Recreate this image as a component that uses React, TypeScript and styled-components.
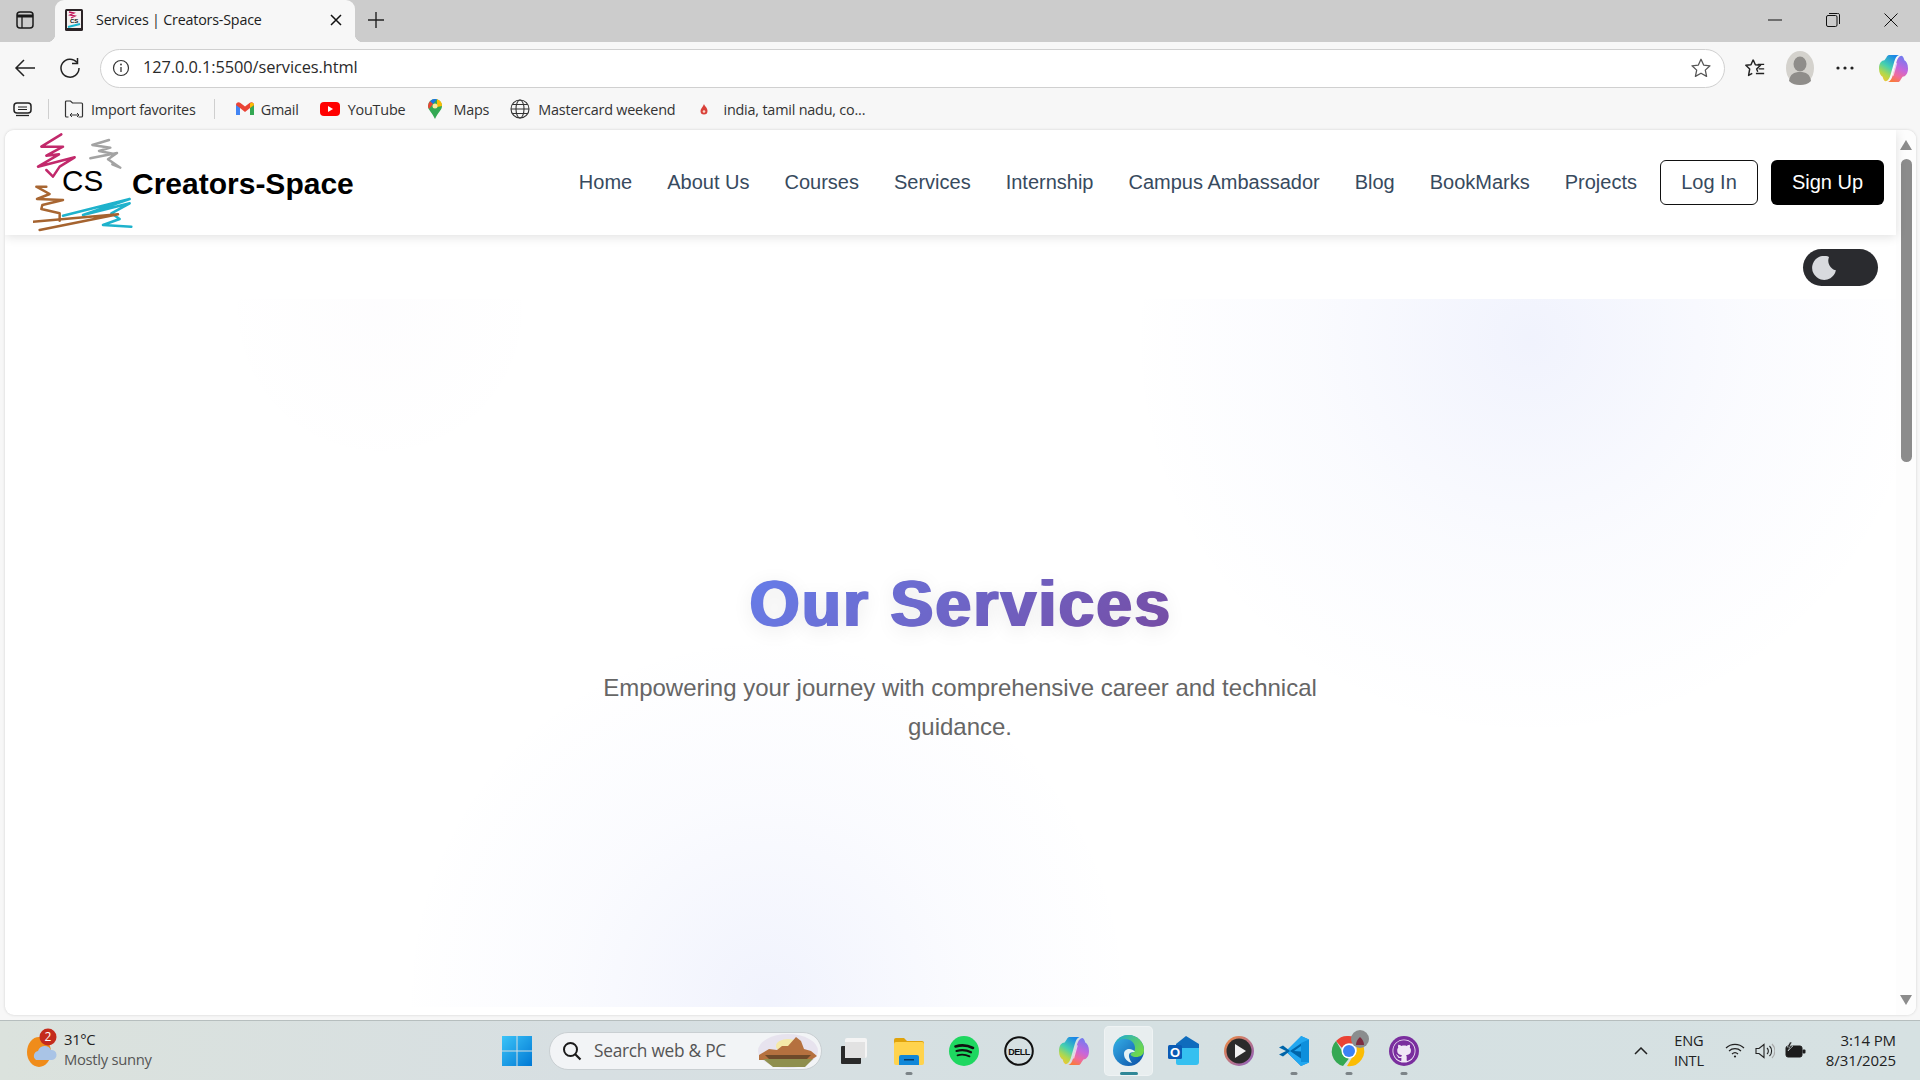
import React from "react";
import styled, { createGlobalStyle } from "styled-components";
import { FaGithub } from "react-icons/fa";

const Global = createGlobalStyle`
  html, body { margin: 0; padding: 0; height: 100%; overflow: hidden; background: #f7f7f7; }
  #root { height: 100%; }
  * { box-sizing: border-box; }
`;
const ui = `"Open Sans", "Noto Sans", "Liberation Sans", sans-serif`;
const web = `"Liberation Sans", Arial, sans-serif`;

const Screen = styled.div`
  width: 1920px; height: 1080px; display: flex; flex-direction: column; background: #f7f7f7; overflow: hidden;
`;
const TabStrip = styled.div`
  height: 42px; flex: none; background: #cccccc; display: flex; align-items: flex-start;
`;
const SideToggle = styled.div`
  width: 55px; height: 40px; display: flex; align-items: center; justify-content: center; padding-right: 6px;
`;
const Tab = styled.div`
  position: relative; width: 300px; height: 42px; margin-top: 0; background: #f7f7f7; border-radius: 9px 9px 0 0;
  display: flex; align-items: center; padding: 0 13px 3px 10px; gap: 13px;
  &::before, &::after { content: ""; position: absolute; bottom: 0; width: 8px; height: 8px; }
  &::before { left: -8px; background: radial-gradient(circle at 0 0, transparent 8px, #f7f7f7 8.5px); }
  &::after { right: -8px; background: radial-gradient(circle at 100% 0, transparent 8px, #f7f7f7 8.5px); }
`;
const TabTitle = styled.span`
  font: 400 14.3px ${ui}; color: #1c1c1c; flex: 1; white-space: nowrap; letter-spacing: -0.2px;
`;
const NewTab = styled.div`
  width: 44px; height: 40px; margin-left: -1px; display: flex; align-items: center; justify-content: center;
`;
const WindowControls = styled.div`
  margin-left: auto; display: flex; height: 40px;
`;
const WinButton = styled.div`
  width: 58px; height: 40px; display: flex; align-items: center; justify-content: center;
`;
const Toolbar = styled.div`
  height: 51px; flex: none; display: flex; align-items: center; padding: 1px 0 0 3px;
`;
const ToolSlot = styled.div<{ $w: number }>`
  width: ${(p) => p.$w}px; height: 36px; flex: none; display: flex; align-items: center; justify-content: center;
`;
const Omnibox = styled.div`
  width: 1625px; height: 39px; flex: none; margin: 0 7px 0 7px; background: #fff; border: 1.5px solid #d0d0d0; border-radius: 20px;
  display: flex; align-items: center; padding: 0 12px 0 11px;
`;
const UrlText = styled.span`
  font: 400 16.4px/22px ${ui}; color: #2a2a2a; margin: -2px 0 0 13px; flex: 1; letter-spacing: -0.1px;
`;
const Bookmarks = styled.div`
  height: 37px; flex: none; display: flex; align-items: center; padding-left: 13px; padding-bottom: 5px;
`;
const BookSep = styled.div<{ $l: number; $r: number }>`
  width: 1px; height: 20px; background: #cfcfcf; margin: 0 ${(p) => p.$r}px 0 ${(p) => p.$l}px;
`;
const Book = styled.div<{ $ml: number; $gap: number }>`
  display: flex; align-items: center; gap: ${(p) => p.$gap}px; margin-left: ${(p) => p.$ml}px;
  font: 400 14.4px ${ui}; color: #333; white-space: nowrap; letter-spacing: -0.2px;
`;
const PageFrame = styled.div`
  height: 885px; flex: none; margin: 0 4px 0 5px; background: #fff; border-radius: 9px; display: flex; overflow: hidden;
  box-shadow: 0 0 3px rgba(0,0,0,.16);
`;
const PageMain = styled.div`
  width: 1891px; flex: none; display: flex; flex-direction: column;
`;
const NavBar = styled.header`
  height: 105px; flex: none; background: #fff; display: flex; align-items: center; padding-left: 28px; padding-right: 12px;
  box-shadow: 0 2px 10px rgba(0,0,0,.12); position: relative; z-index: 2;
`;
const Brand = styled.div`
  display: flex; align-items: center; flex: none;
`;
const BrandName = styled.span`
  font: 700 30px ${web}; color: #000; margin: 3px 0 0 -1px;
`;
const NavLinks = styled.nav`
  margin-left: auto; display: flex; align-items: center; gap: 35px;
`;
const NavLink = styled.a`
  font: 400 20px ${web}; color: #374a5e; white-space: nowrap;
`;
const AuthButtons = styled.div`
  display: flex; gap: 13px; margin-left: 23px;
`;
const LogIn = styled.div`
  width: 98px; height: 45px; border: 1px solid #111; border-radius: 6px; display: flex; align-items: center; justify-content: center;
  font: 400 20px ${web}; color: #374a5e;
`;
const SignUp = styled.div`
  width: 113px; height: 45px; background: #000; border-radius: 6px; display: flex; align-items: center; justify-content: center;
  font: 400 20px ${web}; color: #fff;
`;
const ToggleRow = styled.div`
  height: 64px; flex: none; display: flex; justify-content: flex-end; align-items: flex-start; padding: 14px 18px 0 0;
`;
const ThemeToggle = styled.div`
  width: 75px; height: 37px; border-radius: 19px; background: #2a2b2f; display: flex; align-items: center; padding-left: 9px;
`;
const Hero = styled.section`
  height: 708px; flex: none; display: flex; flex-direction: column; align-items: center; padding: 267px 0 0 19px;
  background:
    radial-gradient(circle 400px at 1525px 40px, rgba(102,126,234,.095) 0%, rgba(102,126,234,.03) 55%, rgba(102,126,234,0) 100%),
    radial-gradient(circle 365px at 762px 700px, rgba(102,126,234,.095) 0%, rgba(102,126,234,.03) 55%, rgba(102,126,234,0) 100%),
    radial-gradient(circle 170px at 375px 10px, rgba(118,75,162,.012) 0%, rgba(118,75,162,0) 100%),
    #fff;
`;
const HeroTitle = styled.h1`
  position: relative; margin: 0 0 0 2px; font: 700 64px/77px ${web}; letter-spacing: 2.3px; display: inline-block;
  background: linear-gradient(135deg, #667eea 0%, #764ba2 100%);
  -webkit-background-clip: text; background-clip: text; -webkit-text-fill-color: transparent;
  text-shadow: 0 4px 20px rgba(0,0,0,.1);
  &::before, &::after {
    content: "Our Services"; position: absolute; left: 0; top: 0; width: 100%;
    background: linear-gradient(135deg, #667eea 0%, #764ba2 100%);
    -webkit-background-clip: text; background-clip: text; -webkit-text-fill-color: transparent;
    text-shadow: none;
  }
  &::before { transform: translate(-1.4px, -0.4px); }
  &::after { transform: translate(1.4px, 0.4px); }
`;
const HeroSub = styled.p`
  margin: 25px 0 0; width: 760px; text-align: center; font: 400 24px/39px ${web}; color: #666;
`;
const ScrollBar = styled.div`
  width: 20px; flex: none; background: #fdfdfd; display: flex; flex-direction: column; align-items: center; padding: 10px 0 0 0;
`;
const ScrollArrow = styled.div<{ $down?: boolean }>`
  width: 0; height: 0; flex: none; border-left: 6px solid transparent; border-right: 6px solid transparent;
  ${(p) => (p.$down ? "border-top: 10px solid #8c8c8c; margin-top: 533px;" : "border-bottom: 10px solid #8c8c8c;")}
`;
const ScrollThumb = styled.div`
  width: 11px; height: 303px; flex: none; margin-top: 9px; border-radius: 6px; background: #8c8c8c;
`;
const Taskbar = styled.footer`
  height: 60px; flex: none; margin-top: 5px; border-top: 1px solid #b6bebe; display: flex; align-items: center;
  background: linear-gradient(90deg, #dbe2dd 0%, #d7dfe2 30%, #d5e0e2 60%, #d6e1e2 100%);
`;
const Weather = styled.div`
  width: 495px; flex: none; display: flex; align-items: center; padding: 0 0 3px 26px; gap: 4px;
`;
const WeatherText = styled.div`
  display: flex; flex-direction: column; font: 400 14.8px/20px ${ui}; color: #222; letter-spacing: -0.3px;
`;
const WeatherSub = styled.span`
  color: #555;
`;
const Start = styled.div`
  width: 44px; flex: none; display: flex; justify-content: center;
`;
const SearchBox = styled.div`
  width: 273px; height: 38px; flex: none; margin-left: 10px; border-radius: 19px; background: #f2f4f6; border: 1px solid #c9cfd2;
  display: flex; align-items: center; padding: 0 2px 0 12px; font: 400 17.3px ${ui}; color: #555; letter-spacing: -0.25px; gap: 12px;
`;
const SearchLabel = styled.span`
  flex: 1; white-space: nowrap;
`;
const TaskGroup = styled.div`
  display: flex; margin-left: 4px;
`;
const TaskSlot = styled.div<{ $active?: boolean }>`
  position: relative; width: 55px; height: 50px; display: flex; align-items: center; justify-content: center; flex: none; border-radius: 5px;
  ${(p) => p.$active && "background: rgba(255,255,255,.45); box-shadow: inset 0 0 0 1px rgba(255,255,255,.3); margin: 0 3px; width: 49px;"}
`;
const RunDot = styled.span<{ $active?: boolean }>`
  position: absolute; bottom: 1px; left: 50%; transform: translateX(-50%); height: 3px; border-radius: 2px;
  width: ${(p) => (p.$active ? 18 : 7)}px; background: ${(p) => (p.$active ? "#2f8797" : "#7c8488")};
`;
const GithubMark = styled.span`
  position: absolute; top: 50%; left: 50%; transform: translate(-50%, -50%); display: flex; font-size: 22px; color: #7a2e9e;
`;
const Tray = styled.div`
  margin-left: auto; display: flex; align-items: center; padding-right: 24px;
`;
const Lang = styled.div`
  display: flex; flex-direction: column; align-items: center; font: 400 14.6px/20px ${ui}; color: #222; margin: -2px 21px 0 26px; letter-spacing: -0.2px;
`;
const TrayIcons = styled.div`
  display: flex; align-items: center; gap: 10px;
`;
const Clock = styled.div`
  display: flex; flex-direction: column; align-items: flex-end; font: 400 15px/20px ${ui}; color: #222; margin: -2px 0 0 20px; letter-spacing: -0.1px;
`;

const Copilot = ({ size }: { size: number }) => (
  <svg width={size} height={size} viewBox="0 0 32 32">
    <defs>
      <linearGradient id={`cpa${size}`} x1=".7" y1="0" x2=".2" y2="1">
        <stop offset="0" stopColor="#1a86e8" /><stop offset=".45" stopColor="#45d0b0" /><stop offset=".75" stopColor="#b4d84a" /><stop offset="1" stopColor="#f7c531" />
      </linearGradient>
      <linearGradient id={`cpb${size}`} x1=".7" y1="0" x2=".3" y2="1">
        <stop offset="0" stopColor="#6f7cf0" /><stop offset=".45" stopColor="#c566dc" /><stop offset=".75" stopColor="#f06b9a" /><stop offset="1" stopColor="#f97a3c" />
      </linearGradient>
    </defs>
    <path d="M11 1H22C19 2 18 5 17 8L13 22C12 26 10 30 7 30C5 29 4.500 27 4 25C2 24 0 21 0 16C0 10 3 7 6 7L8 4C9 2 10 1 11 1Z" fill={`url(#cpa${size})`} />
    <path d="M21 31H10C13 30 14 27 15 24L19 10C20 6 22 2 25 2C27 3 27.500 5 28 7C30 8 32 11 32 16C32 22 29 25 26 25L24 28C23 30 22 31 21 31Z" fill={`url(#cpb${size})`} />
    <path d="M19.500 10L15.500 24" stroke="#fff" strokeOpacity=".65" strokeWidth="1.200" />
  </svg>
);

const Favicon = () => (
  <svg width="18" height="22" viewBox="0 0 18 22">
    <rect width="18" height="22" rx="1.5" fill="#2b2326" />
    <rect x="2" y="2" width="14" height="17" fill="#f4f0f0" />
    <path d="M4 3l5 1-4 2 5 1-4 2" stroke="#c2185b" strokeWidth="1.3" fill="none" />
    <text x="5" y="14" fontFamily="Liberation Sans" fontSize="6" fontWeight="700" fill="#111">CS</text>
    <path d="M3 18l12-3" stroke="#19b5cf" strokeWidth="2" />
  </svg>
);

const scribble = { fill: "none", strokeWidth: 7.5, strokeLinejoin: "round", strokeLinecap: "round" } as const;

const Logo = () => (
  <svg width="100" height="105" viewBox="100 15 300 315">
    <polyline {...scribble} stroke="#c2296b" points="185,28 125,65 190,65 140,92 178,88 115,125 225,97 180,125 160,155 140,135" />
    <polyline {...scribble} stroke="#a3a3a3" points="328,45 278,60 332,68 298,78 340,86 272,100 352,84 325,103 362,128 338,118" />
    <polyline {...scribble} stroke="#a86632" points="140,185 110,185 150,207 112,222 190,225 128,240 125,252 180,265 180,287" />
    <polyline {...scribble} stroke="#1eb2cc" points="190,272 390,222 250,270 390,235 335,265 360,282 310,300 395,305" />
    <polyline {...scribble} stroke="#a5632f" points="100,290 355,268 120,315" />
    <text x="187" y="197" fontFamily="Liberation Sans" fontSize="89" fill="#000">CS</text>
  </svg>
);

const Wave = () => (
  <svg width="62" height="36" viewBox="0 0 62 36">
    <ellipse cx="31" cy="18" rx="30" ry="17" fill="#e7e3ee" />
    <ellipse cx="31" cy="13" rx="12" ry="7" fill="#f5e9a8" />
    <path d="M2 22l10-6 8 1 5-4 6 0 8-9 5 4 3 8 7 2 6 5-6 4-52 0z" fill="#b5713f" />
    <path d="M6 26h50l-8 8H16z" fill="#8f8f4e" />
    <path d="M8 22h46l-4 4H12z" fill="#6e4a2a" />
  </svg>
);

export default function App() {
  return (
    <Screen>
      <Global />
      <TabStrip>
        <SideToggle>
          <svg width="18" height="18" viewBox="0 0 18 18" fill="none">
            <rect x="1" y="1" width="16" height="16" rx="3" stroke="#1a1a1a" strokeWidth="1.5" />
            <path d="M1 5h16" stroke="#1a1a1a" strokeWidth="3" />
            <path d="M6 5v12" stroke="#1a1a1a" strokeWidth="1.3" />
          </svg>
        </SideToggle>
        <Tab>
          <Favicon />
          <TabTitle>Services | Creators-Space</TabTitle>
          <svg width="12" height="12" viewBox="0 0 12 12"><path d="M1 1l10 10M11 1L1 11" stroke="#111" strokeWidth="1.5" /></svg>
        </Tab>
        <NewTab>
          <svg width="18" height="18" viewBox="0 0 18 18"><path d="M9 1v16M1 9h16" stroke="#222" strokeWidth="1.4" /></svg>
        </NewTab>
        <WindowControls>
          <WinButton><svg width="14" height="2" viewBox="0 0 14 2"><path d="M0 1h14" stroke="#111" strokeWidth="1" /></svg></WinButton>
          <WinButton>
            <svg width="14" height="14" viewBox="0 0 14 14" fill="none"><rect x=".5" y="2.5" width="10.5" height="11" rx="1.5" stroke="#111" /><path d="M3 .5h8.5A1.5 1.5 0 0 1 13.5 2v9" stroke="#111" /></svg>
          </WinButton>
          <WinButton><svg width="14" height="14" viewBox="0 0 14 14"><path d="M.5.5l13 13M13.5.5l-13 13" stroke="#111" strokeWidth="1" /></svg></WinButton>
        </WindowControls>
      </TabStrip>
      <Toolbar>
        <ToolSlot $w={44}>
          <svg width="22" height="20" viewBox="0 0 22 20" fill="none"><path d="M21 10H2M10 2l-8 8 8 8" stroke="#222" strokeWidth="1.5" /></svg>
        </ToolSlot>
        <ToolSlot $w={46}>
          <svg width="22" height="22" viewBox="0 0 22 22" fill="none"><path d="M18 5.500A9 9 0 1 0 20 11" stroke="#222" strokeWidth="1.5" /><path d="M18.500 1v5.500H13" stroke="#222" strokeWidth="1.5" /></svg>
        </ToolSlot>
        <Omnibox>
          <svg width="18" height="18" viewBox="0 0 18 18" fill="none"><circle cx="9" cy="9" r="7.5" stroke="#333" strokeWidth="1.2" /><path d="M9 8v5" stroke="#333" strokeWidth="1.3" /><circle cx="9" cy="5.5" r=".9" fill="#333" /></svg>
          <UrlText>127.0.0.1:5500/services.html</UrlText>
          <svg width="22" height="22" viewBox="0 0 24 24" fill="none"><path d="M12 2.500l2.900 6.300 6.900.8-5.100 4.700 1.400 6.800-6.100-3.400-6.100 3.400 1.400-6.800-5.100-4.700 6.900-.8z" stroke="#555" strokeWidth="1.4" strokeLinejoin="round" /></svg>
        </Omnibox>
        <ToolSlot $w={45}>
          <svg width="22" height="22" viewBox="0 0 24 24" fill="none"><path d="M10 3l2.400 5.500 5.600.6-4.200 4 1.200 3M10 3L7.600 8.500 2 9.100l4.200 4-1.200 7 4-2.300" stroke="#222" strokeWidth="1.6" strokeLinejoin="round" /><path d="M15 8h7M16 13h6M13 18h9" stroke="#222" strokeWidth="1.5" /></svg>
        </ToolSlot>
        <ToolSlot $w={45}>
          <svg width="28" height="34" viewBox="0 0 28 34"><ellipse cx="14" cy="17" rx="14" ry="17" fill="#d4d2cd" /><ellipse cx="14" cy="13" rx="6.5" ry="7.5" fill="#8f8d8a" /><path d="M3 30c1-7 5-9 11-9s10 2 11 9c-3 3-7 4-11 4s-8-1-11-4z" fill="#8f8d8a" /></svg>
        </ToolSlot>
        <ToolSlot $w={46}>
          <svg width="18" height="4" viewBox="0 0 18 4"><circle cx="2" cy="2" r="1.6" fill="#222" /><circle cx="9" cy="2" r="1.6" fill="#222" /><circle cx="16" cy="2" r="1.6" fill="#222" /></svg>
        </ToolSlot>
        <ToolSlot $w={50}><Copilot size={29} /></ToolSlot>
      </Toolbar>
      <Bookmarks>
        <svg width="19" height="15" viewBox="0 0 19 15" fill="none"><rect x="1" y="1" width="17" height="10" rx="3" stroke="#222" strokeWidth="1.5" /><path d="M5 5h9M5 7.500h9" stroke="#222" /><path d="M3 13.500h13" stroke="#222" strokeWidth="1.3" /></svg>
        <BookSep $l={16} $r={15} />
        <Book $ml={0} $gap={7}>
          <svg width="20" height="20" viewBox="0 0 20 20" fill="none"><path d="M1.500 8V3a1 1 0 0 1 1-1h4l2 2h9a1 1 0 0 1 1 1v12a1 1 0 0 1-1 1h-3M1.500 8v9a1 1 0 0 0 1 1h2" stroke="#333" strokeWidth="1.2" /><path d="M7 16h7M8 14l-2 2 2 2M13 14l2 2-2 2" stroke="#333" strokeWidth="1" /></svg>
          Import favorites
        </Book>
        <BookSep $l={18} $r={0} />
        <Book $ml={21} $gap={7}>
          <svg width="18" height="14" viewBox="0 0 18 14"><path d="M0 3v10h4V6l5 4 5-4v7h4V3c0-2.500-2.600-3.500-4.500-2L9 4.500 4.500 1C2.600-.5 0 .5 0 3z" fill="#ea4335" /><path d="M0 3v10h4V6z" fill="#4285f4" /><path d="M14 6v7h4V3z" fill="#34a853" /><path d="M16 .6c1 .4 2 1.200 2 2.400l-4 3V1.500z" fill="#fbbc04" /></svg>
          Gmail
        </Book>
        <Book $ml={21} $gap={8}>
          <svg width="20" height="14" viewBox="0 0 20 14"><rect width="20" height="14" rx="4" fill="#f00" /><path d="M8 4v6l5-3z" fill="#fff" /></svg>
          YouTube
        </Book>
        <Book $ml={23} $gap={11}>
          <svg width="14" height="20" viewBox="0 0 14 20"><path d="M7 0a7 7 0 0 1 7 7c0 4-4.500 7-7 13C4.500 14 0 11 0 7a7 7 0 0 1 7-7z" fill="#34a853" /><path d="M2 2.200A7 7 0 0 1 7 0l2 .3L5 5z" fill="#1a73e8" /><path d="M9 .3A7 7 0 0 1 14 7l-5 1z" fill="#fbbc04" /><path d="M0 7a7 7 0 0 1 2-4.800L5 5 1 10a7 7 0 0 1-1-3z" fill="#ea4335" /><circle cx="7" cy="7" r="2.500" fill="#fbe9a0" /></svg>
          Maps
        </Book>
        <Book $ml={21} $gap={8}>
          <svg width="20" height="20" viewBox="0 0 20 20" fill="none" stroke="#333" strokeWidth="1.1"><circle cx="10" cy="10" r="9" /><ellipse cx="10" cy="10" rx="4" ry="9" /><path d="M1 10h18M2.500 5.500h15M2.500 14.500h15" /></svg>
          Mastercard weekend
        </Book>
        <Book $ml={25} $gap={15}>
          <svg width="8" height="11" viewBox="0 0 8 11"><path d="M4 0c.5 2 3.500 3.500 3.500 7a3.500 3.500 0 0 1-7 0C.5 4.500 3 3 4 0z" fill="#d9413a" /><circle cx="4" cy="7.500" r="1.300" fill="#fbd7c8" /></svg>
          india, tamil nadu, co...
        </Book>
      </Bookmarks>
      <PageFrame>
        <PageMain>
          <NavBar>
            <Brand>
              <Logo />
              <BrandName>Creators-Space</BrandName>
            </Brand>
            <NavLinks>
              {["Home", "About Us", "Courses", "Services", "Internship", "Campus Ambassador", "Blog", "BookMarks", "Projects"].map((l) => (
                <NavLink key={l}>{l}</NavLink>
              ))}
            </NavLinks>
            <AuthButtons>
              <LogIn>Log In</LogIn>
              <SignUp>Sign Up</SignUp>
            </AuthButtons>
          </NavBar>
          <ToggleRow>
            <ThemeToggle>
              <svg width="24" height="24" viewBox="0 0 24 24"><path d="M17 .9a12 12 0 1 0 6.900 13.400A10 10 0 0 1 17 .9z" fill="#d8dade" /></svg>
            </ThemeToggle>
          </ToggleRow>
          <Hero>
            <HeroTitle>Our Services</HeroTitle>
            <HeroSub>Empowering your journey with comprehensive career and technical guidance.</HeroSub>
          </Hero>
        </PageMain>
        <ScrollBar>
          <ScrollArrow />
          <ScrollThumb />
          <ScrollArrow $down />
        </ScrollBar>
      </PageFrame>
      <Taskbar>
        <Weather>
          <svg width="34" height="42" viewBox="0 0 34 42">
            <ellipse cx="13" cy="24" rx="12" ry="15" fill="#f08c1a" />
            <path d="M10 32a5 5 0 0 1 2-9 7 7 0 0 1 13-1 5 5 0 0 1 1 10z" fill="#a9c4e6" />
            <circle cx="22" cy="9" r="8.500" fill="#c42b1c" />
            <text x="22" y="13" textAnchor="middle" fontFamily="Open Sans" fontSize="12" fill="#fff">2</text>
          </svg>
          <WeatherText>
            <span>31°C</span>
            <WeatherSub>Mostly sunny</WeatherSub>
          </WeatherText>
        </Weather>
        <Start>
          <svg width="30" height="30" viewBox="0 0 30 30">
            <defs><linearGradient id="win" x1="0" y1="0" x2="1" y2="1"><stop offset="0" stopColor="#3cc4f8" /><stop offset="1" stopColor="#0078d4" /></linearGradient></defs>
            <path d="M0 0h14.500v14.500H0zM15.500 0H30v14.500H15.500zM0 15.500h14.500V30H0zM15.500 15.500H30V30H15.500z" fill="url(#win)" />
          </svg>
        </Start>
        <SearchBox>
          <svg width="20" height="20" viewBox="0 0 20 20" fill="none"><circle cx="8.500" cy="8.500" r="6.500" stroke="#1a1a1a" strokeWidth="2" /><path d="M13 13l5.500 5.500" stroke="#1a1a1a" strokeWidth="2.200" /></svg>
          <SearchLabel>Search web &amp; PC</SearchLabel>
          <Wave />
        </SearchBox>
        <TaskGroup>
          <TaskSlot>
            <svg width="26" height="26" viewBox="0 0 26 26"><rect x="4" y="0" width="22" height="20" rx="2" fill="#f4f4f4" /><rect x="0" y="8" width="20" height="18" rx="1" fill="#2a2a2a" /><rect x="4" y="4" width="20" height="16" fill="#e2e2e2" /></svg>
          </TaskSlot>
          <TaskSlot>
            <svg width="30" height="28" viewBox="0 0 30 28"><path d="M0 3a2 2 0 0 1 2-2h8l3 3h15a2 2 0 0 1 2 2v3H0z" fill="#e0a30c" /><rect y="5" width="30" height="23" rx="2" fill="#ffd34d" /><path d="M5 20a2 2 0 0 1 2-2h16a2 2 0 0 1 2 2v8H5z" fill="#1187d8" /><rect x="10" y="22" width="10" height="1.500" fill="#063a66" /></svg>
            <RunDot />
          </TaskSlot>
          <TaskSlot>
            <svg width="30" height="30" viewBox="0 0 30 30" fill="none"><circle cx="15" cy="15" r="15" fill="#1ed760" /><path d="M6.500 10.500c6-1.800 12-1.300 17.500 1.500" stroke="#111" strokeWidth="2.600" strokeLinecap="round" /><path d="M7.500 15c5-1.400 10-1 14.500 1.300" stroke="#111" strokeWidth="2.200" strokeLinecap="round" /><path d="M8.500 19.300c4-1 8-.8 12 1.100" stroke="#111" strokeWidth="1.800" strokeLinecap="round" /></svg>
          </TaskSlot>
          <TaskSlot>
            <svg width="30" height="30" viewBox="0 0 30 30" fill="none"><circle cx="15" cy="15" r="13.800" stroke="#111" strokeWidth="2" /><text x="15" y="18.500" textAnchor="middle" fontFamily="Liberation Sans" fontWeight="700" fontSize="9" letterSpacing="-.5" fill="#111">DELL</text></svg>
          </TaskSlot>
          <TaskSlot><Copilot size={30} /></TaskSlot>
          <TaskSlot $active>
            <svg width="31" height="31" viewBox="0 0 31 31">
              <defs>
                <linearGradient id="edgeA" x1="0" y1="0" x2="1" y2="1"><stop offset="0" stopColor="#37b4ea" /><stop offset="1" stopColor="#0a4da5" /></linearGradient>
                <linearGradient id="edgeB" x1="0" y1="0" x2="1" y2=".6"><stop offset="0" stopColor="#19a8d8" /><stop offset="1" stopColor="#6fd94a" /></linearGradient>
              </defs>
              <circle cx="15.500" cy="15.500" r="15.500" fill="url(#edgeA)" />
              <path d="M15.500 0A15.500 15.500 0 0 1 31 15.500C31 20 27 22 23 22C19 22 17.500 20 17.500 19C17.500 18 22 18 22 13C22 8 18 4 12 4C8 4 4 6 1.500 9A15.500 15.500 0 0 1 15.500 0Z" fill="url(#edgeB)" />
              <path d="M22 17C18 12 11 14 11 19C11 24 15 27 19 28C16 24 15 20 17 18C18.500 17 20 17 22 17Z" fill="#e3f2f5" />
            </svg>
            <RunDot $active />
          </TaskSlot>
          <TaskSlot>
            <svg width="31" height="29" viewBox="0 0 31 29"><path d="M8 8l10-8 13 8v14a3 3 0 0 1-3 3H10a2 2 0 0 1-2-2z" fill="#0f6cbd" /><path d="M8 12h23v14a3 3 0 0 1-3 3H10a2 2 0 0 1-2-2z" fill="#35c0f0" /><rect y="9" width="14" height="14" rx="1.500" fill="#0a5bb5" /><text x="7" y="20.500" textAnchor="middle" fontFamily="Liberation Sans" fontWeight="700" fontSize="13" fill="#fff">O</text></svg>
          </TaskSlot>
          <TaskSlot>
            <svg width="30" height="30" viewBox="0 0 30 30"><defs><linearGradient id="pl" x1="0" y1="0" x2="1" y2="1"><stop offset="0" stopColor="#f08a3c" /><stop offset="1" stopColor="#8a5fc7" /></linearGradient></defs><circle cx="15" cy="15" r="15" fill="url(#pl)" /><circle cx="15" cy="15" r="12.500" fill="#2b2b2b" /><path d="M11 8l11 7-11 7z" fill="#f2f2f2" /></svg>
          </TaskSlot>
          <TaskSlot>
            <svg width="30" height="30" viewBox="0 0 30 30"><path d="M22 0l8 3.500v23L22 30 8 16.500 22 3z" fill="#0e8fdc" /><path d="M22 0L7 15l15 15 8-3.500-1-.5-7-0V7l8-3.500z" fill="#22a7f0" /><path d="M22 7.500L11 15 4 9.500 0 11.500 7 15l-7 3.500 4 2 7-5.500 11 7.500v-7L15 15l7-5z" fill="#0065a9" /></svg>
            <RunDot />
          </TaskSlot>
          <TaskSlot>
            <svg width="30" height="30" viewBox="0 0 30 30" overflow="visible">
              <path d="M15 0a15 15 0 0 1 13 7.500H15a7.500 7.500 0 0 0-7 4.500L2 5A15 15 0 0 1 15 0z" fill="#ea4335" />
              <path d="M2 5l6.500 11a7.500 7.500 0 0 0 6.500 6.500L9 30A15 15 0 0 1 2 5z" fill="#34a853" />
              <path d="M28 7.500A15 15 0 0 1 13 30l6-10a7.500 7.500 0 0 0 1-12.500z" fill="#fbbc04" />
              <circle cx="15" cy="15" r="7.500" fill="#fff" /><circle cx="15" cy="15" r="6" fill="#3b82f6" />
              <circle cx="26" cy="3" r="9" fill="#8a8d8e" /><path d="M22 9c0-3 1-5 4-8 3 3 4 5 4 8z" fill="#7d2b3e" />
            </svg>
            <RunDot />
          </TaskSlot>
          <TaskSlot>
            <svg width="30" height="30" viewBox="0 0 30 30"><circle cx="15" cy="15" r="15" fill="#7a2e9e" /><circle cx="15" cy="15" r="11.500" fill="#f0e8f6" /></svg>
            <GithubMark><FaGithub /></GithubMark>
            <RunDot />
          </TaskSlot>
        </TaskGroup>
        <Tray>
          <svg width="14" height="8" viewBox="0 0 14 8" fill="none"><path d="M1 7l6-6 6 6" stroke="#222" strokeWidth="1.500" /></svg>
          <Lang><span>ENG</span><span>INTL</span></Lang>
          <TrayIcons>
            <svg width="20" height="15" viewBox="0 0 20 15" fill="none" stroke="#222" strokeWidth="1.200"><path d="M1 5a13 13 0 0 1 18 0M4 8a9 9 0 0 1 12 0M7 11a4.500 4.500 0 0 1 6 0" /><circle cx="10" cy="13.500" r="1.100" fill="#222" stroke="none" /></svg>
            <svg width="20" height="16" viewBox="0 0 20 16" fill="none" stroke="#222" strokeWidth="1.100"><path d="M1 5.500h3l5-4v13l-5-4H1z" /><path d="M12 5a4 4 0 0 1 0 6M14.500 3a7 7 0 0 1 0 10" /><path d="M17 1a10 10 0 0 1 0 14" stroke="#aaa" /></svg>
            <svg width="21" height="17" viewBox="0 0 21 17" fill="none"><rect x="1" y="4" width="16" height="11" rx="2" fill="#1c1c1c" stroke="#1c1c1c" /><rect x="17.500" y="7.500" width="3" height="4" rx="1" fill="#1c1c1c" /><path d="M5 0L2 5h3l-2 4 5-5H5l2-4z" fill="#1c1c1c" stroke="#d6e1e2" strokeWidth=".6" /></svg>
          </TrayIcons>
          <Clock><span>3:14 PM</span><span>8/31/2025</span></Clock>
        </Tray>
      </Taskbar>
    </Screen>
  );
}
